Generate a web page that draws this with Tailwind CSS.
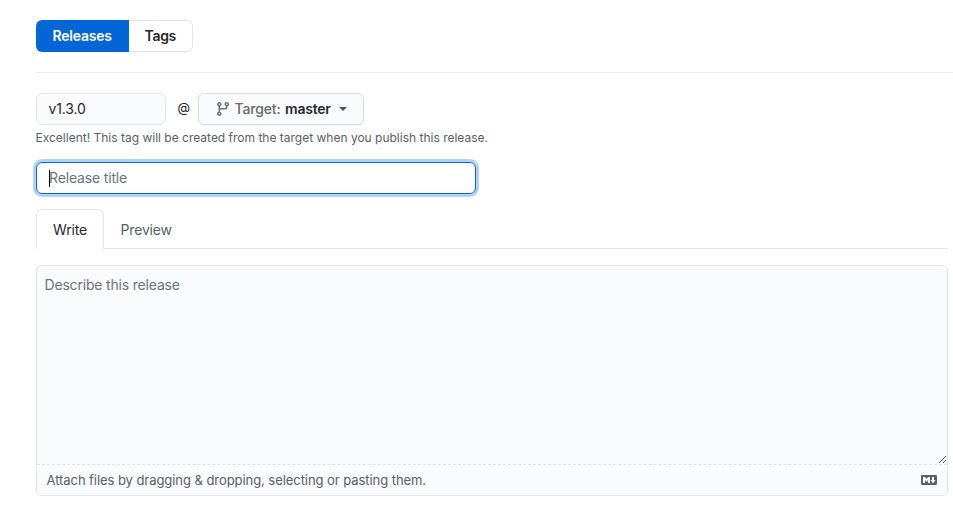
<!DOCTYPE html>
<html lang="en">
<head>
<meta charset="utf-8">
<title>New release</title>
<script src="https://cdn.jsdelivr.net/npm/@tailwindcss/browser@4"></script>
</head>
<body class="bg-white font-['Inter',sans-serif] text-sm leading-5 text-[#24292e] overflow-hidden">
<main class="pl-9 pt-5 h-[505px] flex flex-col">
  <nav class="flex h-8 shrink-0">
    <a class="w-[93px] pl-[16.5px] pt-1.5 rounded-l-md bg-[#0366d6] text-white font-semibold whitespace-nowrap tracking-[-0.23px]">Releases</a>
    <a class="w-16 pl-[15.5px] pt-[5px] rounded-r-md border border-l-0 border-[#e1e4e8] font-semibold whitespace-nowrap tracking-[-0.3px]">Tags</a>
  </nav>
  <hr class="mt-5 border-0 h-px shrink-0 bg-[#eaecef]">
  <div class="mt-5 flex h-8 shrink-0">
    <div class="w-[130px] pl-[11.5px] pt-[5px] rounded-md border border-[#e1e4e8] bg-[#fafbfc] tracking-[-0.15px]">v1.3.0</div>
    <span class="w-8 pl-[11.5px] pt-1 text-[13px]">@</span>
    <button class="w-[166px] flex items-center pl-4 rounded-md border border-[#d9dbde] bg-[#fafbfc] whitespace-nowrap shadow-[0_1px_0_rgba(27,31,35,0.04)]">
      <svg class="w-4 h-4 shrink-0 fill-[#6a737d]" viewBox="0 0 16 16"><path fill-rule="evenodd" d="M11.75 2.5a.75.75 0 100 1.5.75.75 0 000-1.5zm-2.25.75a2.25 2.25 0 113 2.122V6A2.5 2.5 0 0110 8.5H6a1 1 0 00-1 1v1.128a2.251 2.251 0 11-1.5 0V5.372a2.25 2.25 0 111.5 0v1.836A2.492 2.492 0 016 7h4a1 1 0 001-1v-.628A2.25 2.25 0 019.5 3.25zM4.25 12a.75.75 0 100 1.5.75.75 0 000-1.5zM3.5 3.25a.75.75 0 111.5 0 .75.75 0 01-1.5 0z"/></svg>
      <span class="ml-[3.5px] w-[50.5px] text-left font-medium text-[#66696e] tracking-[-0.15px]">Target:</span>
      <span class="w-[47px] text-left font-semibold tracking-[-0.23px]">master</span>
      <span class="ml-[7px] border-x-4 border-x-transparent border-t-4 border-t-[#505458]"></span>
    </button>
  </div>
  <p class="-ml-[0.5px] mt-1 h-[18px] shrink-0 text-xs leading-[18px] text-[#586069] whitespace-nowrap">Excellent! This tag will be created from the target when you publish this release.</p>
  <div class="relative mt-[15px] w-[440px] h-8 shrink-0 pl-3 pt-[5px] rounded-md border border-[#0366d6] shadow-[0_0_0_3px_rgba(3,102,214,0.3)] text-[#6a737d] tracking-[-0.16px]">Release title<i class="absolute left-3 top-[7px] w-px h-[17px] bg-black"></i></div>
  <div class="mt-[15px] mr-[5px] h-10 shrink-0 flex shadow-[inset_0_-1px_0_#e1e4e8] tracking-[-0.16px]">
    <a class="w-[68px] pl-4 pt-[10px] rounded-t-md border border-b-0 border-[#e1e4e8] bg-white">Write</a>
    <a class="pl-[16.5px] pt-[11px] text-[#586069]">Preview</a>
  </div>
  <section class="mt-4 mr-[5px] h-[231px] shrink-0 flex flex-col rounded-md border border-[#e1e4e8] bg-[#fafbfc]">
    <div class="h-[198px] flex justify-between pl-[7.5px] pt-[9px] text-[#6a737d] tracking-[-0.18px]">
      <span>Describe this release</span>
      <svg class="w-[9px] h-[9px] self-end" viewBox="0 0 9 9" fill="none" stroke="#505357" stroke-width="1"><path d="M1 8L8 1M5 8L8 5"/></svg>
    </div>
    <div class="h-[31px] flex items-center justify-between border-t border-dashed border-[#dfe2e5] pl-[9.5px] pr-[10px] text-[13px] text-[#586069] tracking-[-0.06px]">
      <span class="whitespace-nowrap">Attach files by dragging &amp; dropping, selecting or pasting them.</span>
      <svg class="w-4 h-4" viewBox="0 0 16 16" fill="#586069"><path fill-rule="evenodd" d="M14.85 3H1.15C.52 3 0 3.52 0 4.15v7.69C0 12.48.52 13 1.15 13h13.69c.64 0 1.15-.52 1.15-1.15v-7.7C16 3.52 15.48 3 14.85 3zM9 11H7V8L5.5 9.92 4 8v3H2V5h2l1.5 2L7 5h2v6zm2.99.5L9.5 8H11V5h2v3h1.5l-2.51 3.5z"/></svg>
    </div>
  </section>
</main>
</body>
</html>
